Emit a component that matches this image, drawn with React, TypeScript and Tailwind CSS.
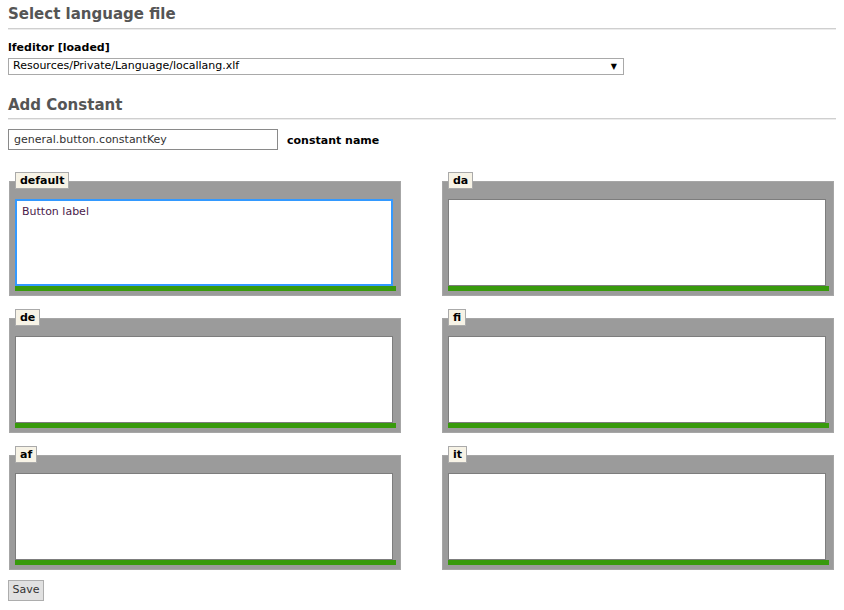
import React from "react";

const font = { fontFamily: '"DejaVu Sans", Verdana, sans-serif' };

type Lang = { code: string; value?: string; focused?: boolean };

const languages: Lang[] = [
  { code: "default", value: "Button label", focused: true },
  { code: "da" },
  { code: "de" },
  { code: "fi" },
  { code: "af" },
  { code: "it" },
];

function LanguageBox({ lang }: { lang: Lang }) {
  return (
    <div className="flex flex-col">
      <div className="relative z-10 self-start ml-[6px] h-[17px] px-[4px] border border-[#aaaaaa] bg-[#f7f3e6] text-[11px] font-bold leading-[15px] text-black">
        {lang.code}
      </div>
      <div className="mt-[-8px] border border-[#a6a6a6] bg-[#9b9b9b] pt-[17px] pl-[5px] pr-[4px] pb-[4px]">
        <textarea
          defaultValue={lang.value}
          className={
            "block w-[378px] h-[87px] resize-none bg-white px-[5px] py-[4px] text-[11px] leading-[14px] text-[#4a1a4a] outline-none " +
            (lang.focused ? "border-2 border-[#3399ff]" : "border border-[#7d7d7d]")
          }
        />
        <div className="h-[5px] bg-[#389a0c]" />
      </div>
    </div>
  );
}

export default function App() {
  return (
    <div className="w-[844px] h-[610px] bg-white pl-[8px] pr-[8px] pt-[4px] text-[#333]" style={font}>
      <h2 className="text-[15px] font-bold leading-[20px] text-[#555] pb-[4px] border-b border-[#cfcfcf]">
        Select language file
      </h2>
      <div className="h-px bg-[#ececec]" />

      <div className="mt-[11px] text-[11px] font-bold leading-[14px] text-black">lfeditor [loaded]</div>
      <div className="mt-[3px] flex h-[17px] w-[616px] items-center justify-between border border-[#a9a9a9] pl-[4px] pr-[6px] text-[11px] text-black">
        <span>Resources/Private/Language/locallang.xlf</span>
        <span className="text-[8px] leading-none">▼</span>
      </div>

      <h2 className="mt-[20px] text-[15px] font-bold leading-[20px] text-[#555] pb-[3px] border-b border-[#cfcfcf]">
        Add Constant
      </h2>
      <div className="h-px bg-[#ececec]" />

      <div className="mt-[9px] flex items-center gap-[9px]">
        <input
          defaultValue="general.button.constantKey"
          className="h-[21px] w-[270px] border border-[#8a8a8a] px-[5px] text-[11px] text-[#333] outline-none"
        />
        <span className="mt-[3px] text-[11px] font-bold text-black">constant name</span>
      </div>

      <div className="mt-[22px] ml-[1px] grid grid-cols-[392px_392px] gap-x-[41px] gap-y-[13px]">
        {languages.map((l) => (
          <LanguageBox key={l.code} lang={l} />
        ))}
      </div>

      <button className="mt-[10px] h-[21px] w-[36px] border border-[#adadad] bg-[#e1e1e1] text-[11px] text-[#333]">
        Save
      </button>
    </div>
  );
}
